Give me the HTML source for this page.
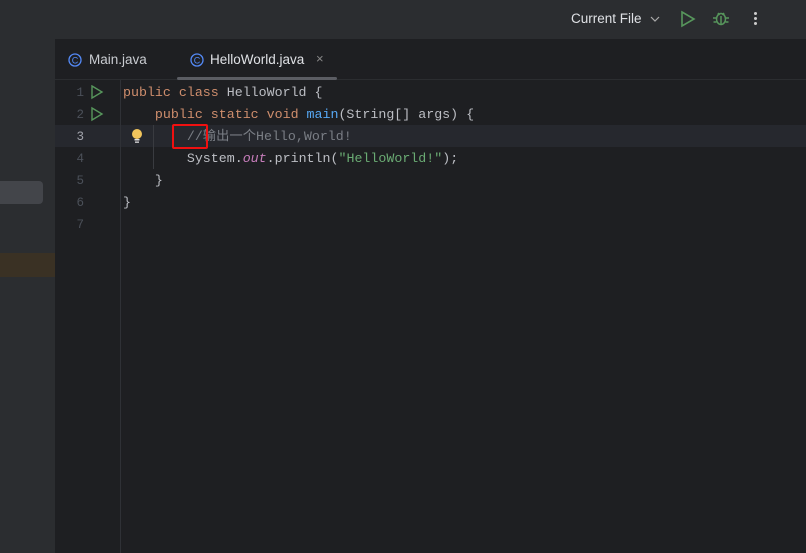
<!DOCTYPE html>
<html><head><style>
body{margin:0;width:806px;height:553px;background:#1e1f22;position:relative;overflow:hidden;font-family:"Liberation Sans",sans-serif}
.abs{position:absolute}
.code{font-family:"Liberation Mono","Noto Sans CJK SC",monospace;font-size:13.3px;color:#bcbec4;white-space:pre;line-height:22px}
.ln{font-family:"Liberation Mono",monospace;font-size:12.5px;color:#4b5059;width:30px;text-align:right;line-height:22px}
.k{color:#cf8e6d}.f{color:#56a8f5}.c{color:#7a7e85}.s{color:#6aab73}.o{color:#c77dbb;font-style:italic}
</style></head><body>
<div class="abs" style="left:0;top:0;width:806px;height:39px;background:#2b2d30"></div>
<div class="abs" style="left:0;top:39px;width:55px;height:514px;background:#2b2d30"></div>
<div class="abs" style="left:0;top:181px;width:43px;height:23px;background:#43454a;border-radius:0 4px 4px 0"></div>
<div class="abs" style="left:0;top:253px;width:55px;height:24px;background:#3a3124"></div>
<div class="abs" style="left:571px;top:11px;color:#dfe1e5;font-size:13.5px">Current File</div>
<svg class="abs" style="left:650px;top:15px" width="10" height="8"><path d="M1 2l4 4 4-4" stroke="#aaa" fill="none" stroke-width="1.2"/></svg>
<svg class="abs" style="left:680px;top:10px" width="16" height="18"><path d="M2 2L14 9 2 16Z" stroke="#57965c" fill="none" stroke-width="1.6"/></svg>
<svg class="abs" style="left:712px;top:9px" width="18" height="18"><g stroke="#57965c" fill="none" stroke-width="1.5"><ellipse cx="9" cy="10" rx="4.5" ry="5.5"/><path d="M6 4l1.5 2M12 4l-1.5 2M4.5 9H1M4.5 13H1.5M13.5 9H17M13.5 13H16.5M9 7v8"/></g></svg>
<div class="abs" style="left:754px;top:12px;width:3px;height:3px;background:#ccc;border-radius:50%;box-shadow:0 5px 0 #ccc,0 10px 0 #ccc"></div>
<div class="abs" style="left:55px;top:79px;width:751px;height:1px;background:#2b2d30"></div>
<svg class="abs" style="left:68px;top:53px" width="14" height="14"><circle cx="7" cy="7" r="6" stroke="#548af7" fill="none" stroke-width="1.3"/><text x="7" y="10.5" font-size="9" fill="#548af7" text-anchor="middle" font-family="Liberation Sans">C</text></svg>
<div class="abs" style="left:89px;top:52px;color:#c9ccd1;font-size:13.5px">Main.java</div>
<svg class="abs" style="left:190px;top:53px" width="14" height="14"><circle cx="7" cy="7" r="6" stroke="#548af7" fill="none" stroke-width="1.3"/><text x="7" y="10.5" font-size="9" fill="#548af7" text-anchor="middle" font-family="Liberation Sans">C</text></svg>
<div class="abs" style="left:210px;top:52px;color:#dfe1e5;font-size:13.5px">HelloWorld.java</div>
<div class="abs" style="left:316px;top:51px;color:#888;font-size:13px">×</div>
<div class="abs" style="left:177px;top:77px;width:160px;height:3px;background:#5b5d63;border-radius:2px"></div>
<div class="abs" style="left:55px;top:125px;width:751px;height:22px;background:#26282e"></div>
<div class="abs" style="left:120px;top:80px;width:1px;height:473px;background:#2f3136"></div>
<div class="abs" style="left:153px;top:125px;width:1px;height:44px;background:#393b40"></div>
<div class="abs ln" style="left:54px;top:82px">1<br>2<br><span style="color:#a1a3ab">3</span><br>4<br>5<br>6<br>7</div>
<svg class="abs" style="left:90px;top:85px" width="14" height="40"><g stroke="#57965c" fill="none" stroke-width="1.4"><path d="M2 1L12 7 2 13Z"/><path d="M2 23L12 29 2 35Z"/></g></svg>
<svg class="abs" style="left:131px;top:128px" width="12" height="16"><circle cx="6" cy="6" r="5" fill="#f2c55c"/><rect x="3.5" y="11" width="5" height="1.5" fill="#ddd"/><rect x="4" y="13.5" width="4" height="1.3" fill="#ddd"/></svg>
<div class="abs code" style="left:123px;top:82px"><span class="k">public class </span>HelloWorld {
    <span class="k">public static void </span><span class="f">main</span>(String[] args) {
        <span class="c">//输出一个Hello,World!</span>
        System.<span class="o">out</span>.println(<span class="s">"HelloWorld!"</span>);
    }
}</div>
<div class="abs" style="left:172px;top:124px;width:32px;height:21px;border:2px solid #f01010;border-radius:2px"></div>
</body></html>
